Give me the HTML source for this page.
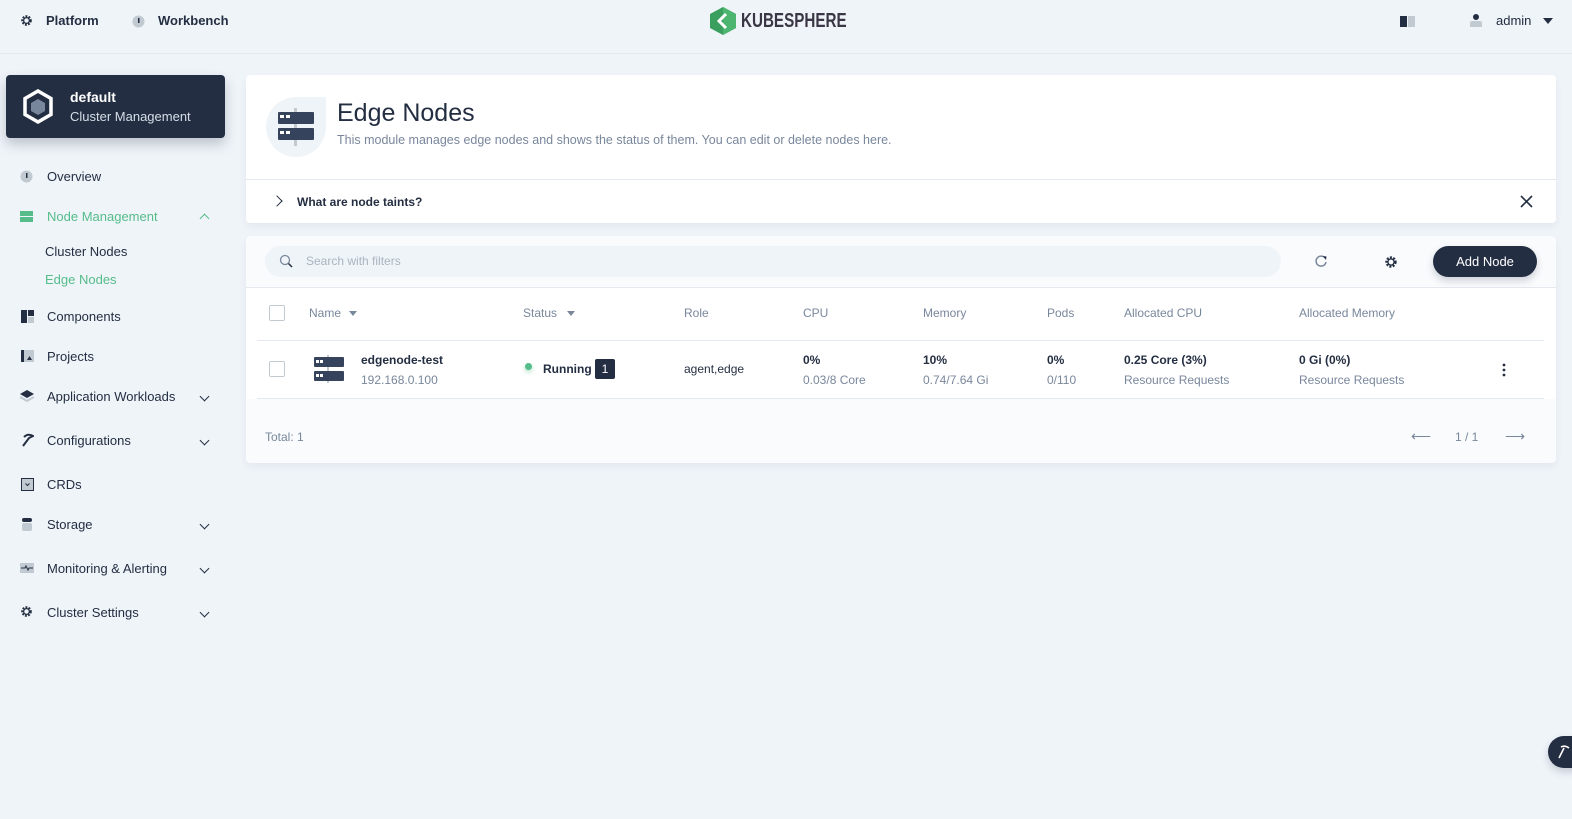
<!DOCTYPE html>
<html><head><meta charset="utf-8"><style>
*{box-sizing:border-box;margin:0;padding:0}
body{width:1572px;height:819px;background:#eff4f9;font-family:"Liberation Sans",sans-serif;color:#242e42;position:relative;overflow:hidden;font-size:12px}
.a{position:absolute}
.top{left:0;top:0;width:1572px;height:54px;border-bottom:1px solid #e3e9ef}
.nav{font-size:13px;font-weight:bold;color:#242e42}
.side{font-size:13px;color:#242e42}
.chev{width:7px;height:7px;border-right:1.5px solid #242e42;border-bottom:1.5px solid #242e42;transform:rotate(45deg)}
.card{background:#fff;border-radius:4px;box-shadow:0 4px 8px rgba(36,46,66,.06)}
.th{font-size:12px;color:#79879c;top:306px}
.cb{width:16px;height:16px;border:1px solid #c1c9d1;border-radius:2px;background:#fff}
.b{font-weight:bold;font-size:12px;color:#242e42}
.s{font-size:12px;color:#79879c}
</style></head><body>
<div class="a top"></div>
<svg class="a" style="left:20px;top:14px" width="13" height="13" viewBox="0 0 16 16"><circle cx="8" cy="8" r="5" fill="none" stroke="#242e42" stroke-width="3" stroke-dasharray="2.2 1.5"/><circle cx="8" cy="8" r="3.5" fill="none" stroke="#242e42" stroke-width="1.5"/></svg>
<div class="a nav" style="left:46px;top:13px">Platform</div>
<svg class="a" style="left:132px;top:15px" width="13" height="13"><circle cx="6.5" cy="6.5" r="6" fill="#c1c9d1"/><rect x="6" y="3" width="1.5" height="5" fill="#242e42"/></svg>
<div class="a nav" style="left:158px;top:13px">Workbench</div>
<svg class="a" style="left:710px;top:7px" width="26" height="28" viewBox="0 0 26 28"><path d="M13 0L26 7V21L13 28L0 21V7Z" fill="#3a9e5f"/><path d="M13 0L26 7V21L13 28Z" fill="#4cb56f"/><path d="M16 7L9 14L16 21" fill="none" stroke="#fff" stroke-width="3"/></svg>
<div class="a" style="left:741px;top:10px;font-size:20px;font-weight:bold;color:#3b3645;transform:scaleX(0.76);transform-origin:left top">KUBESPHERE</div>
<svg class="a" style="left:1400px;top:16px" width="15" height="11"><rect width="7" height="11" fill="#242e42"/><rect x="8" width="7" height="11" fill="#c1c9d1"/></svg>
<svg class="a" style="left:1470px;top:13px" width="12" height="14"><circle cx="6" cy="4" r="3" fill="#242e42"/><path d="M0 14V10Q0 8 3 8H9Q12 8 12 10V14Z" fill="#c1c9d1"/></svg>
<div class="a" style="left:1496px;top:13px;font-size:13px;color:#242e42">admin</div>
<div class="a" style="left:1543px;top:18px;border:5px solid transparent;border-top:6px solid #242e42"></div>

<div class="a" style="left:6px;top:75px;width:219px;height:63px;background:#242e42;border-radius:4px;box-shadow:0 6px 12px rgba(36,46,66,.25)"></div>
<svg class="a" style="left:22px;top:89px" width="32" height="35" viewBox="0 0 32 35"><path d="M16 2L29 9.5V25.5L16 33L3 25.5V9.5Z" fill="none" stroke="#fff" stroke-width="3.5"/><path d="M16 10L23 14V22L16 26L9 22V14Z" fill="#79879c"/></svg>
<div class="a" style="left:70px;top:89px;color:#fff;font-weight:bold;font-size:14px">default</div>
<div class="a" style="left:70px;top:109px;color:#d5dee7;font-size:13px">Cluster Management</div>

<svg class="a" style="left:20px;top:170px" width="13" height="13"><circle cx="6.5" cy="6.5" r="6" fill="#c1c9d1"/><rect x="6" y="3" width="1.5" height="5" fill="#242e42"/></svg>
<div class="a side" style="left:47px;top:169px">Overview</div>
<svg class="a" style="left:20px;top:211px" width="13" height="11"><rect width="13" height="5" fill="#55bc8a"/><rect y="6" width="13" height="5" fill="#55bc8a"/></svg>
<div class="a side" style="left:47px;top:209px;color:#55bc8a">Node Management</div>
<div class="a chev" style="left:201px;top:215px;transform:rotate(-135deg);border-color:#55bc8a"></div>
<div class="a side" style="left:45px;top:244px">Cluster Nodes</div>
<div class="a side" style="left:45px;top:272px;color:#55bc8a">Edge Nodes</div>
<svg class="a" style="left:21px;top:310px" width="13" height="13"><rect width="6" height="13" fill="#242e42"/><rect x="7" width="6" height="6" fill="#242e42"/><rect x="7" y="7" width="6" height="6" fill="#c1c9d1"/></svg>
<div class="a side" style="left:47px;top:309px">Components</div>
<svg class="a" style="left:21px;top:350px" width="13" height="12"><rect width="13" height="12" fill="#c1c9d1"/><rect width="3" height="12" fill="#242e42"/><path d="M6 10L8.5 6L11 10Z" fill="#242e42"/></svg>
<div class="a side" style="left:47px;top:349px">Projects</div>
<svg class="a" style="left:20px;top:390px" width="14" height="12"><path d="M7 0L14 4L7 8L0 4Z" fill="#242e42"/><path d="M0 7L7 11L14 7" fill="none" stroke="#c1c9d1" stroke-width="2"/></svg>
<div class="a side" style="left:47px;top:389px">Application Workloads</div>
<div class="a chev" style="left:201px;top:393px"></div>
<svg class="a" style="left:21px;top:433px" width="13" height="14"><path d="M3 4Q7 0 12 3L8 5L2 13" fill="none" stroke="#242e42" stroke-width="2"/></svg>
<div class="a side" style="left:47px;top:433px">Configurations</div>
<div class="a chev" style="left:201px;top:437px"></div>
<svg class="a" style="left:21px;top:478px" width="13" height="13"><rect x=".5" y=".5" width="12" height="12" fill="#c1c9d1" stroke="#242e42"/><path d="M4.5 5.5L6.5 7.5L8.5 5.5" fill="none" stroke="#242e42"/></svg>
<div class="a side" style="left:47px;top:477px">CRDs</div>
<svg class="a" style="left:22px;top:518px" width="10" height="13"><rect width="10" height="4" rx="2" fill="#242e42"/><rect y="5" width="10" height="8" rx="2" fill="#c1c9d1"/></svg>
<div class="a side" style="left:47px;top:517px">Storage</div>
<div class="a chev" style="left:201px;top:521px"></div>
<svg class="a" style="left:20px;top:563px" width="14" height="10"><rect width="14" height="10" fill="#c1c9d1"/><path d="M1 5H5L6 3L8 7L9 5H13" fill="none" stroke="#242e42"/></svg>
<div class="a side" style="left:47px;top:561px">Monitoring &amp; Alerting</div>
<div class="a chev" style="left:201px;top:565px"></div>
<svg class="a" style="left:20px;top:605px" width="13" height="13" viewBox="0 0 16 16"><circle cx="8" cy="8" r="5" fill="none" stroke="#242e42" stroke-width="3" stroke-dasharray="2.2 1.5"/><circle cx="8" cy="8" r="3.5" fill="none" stroke="#242e42" stroke-width="1.5"/></svg>
<div class="a side" style="left:47px;top:605px">Cluster Settings</div>
<div class="a chev" style="left:201px;top:609px"></div>

<div class="a card" style="left:246px;top:75px;width:1310px;height:148px"></div>
<div class="a" style="left:246px;top:179px;width:1310px;height:1px;background:#e3e9ef"></div>
<div class="a" style="left:266px;top:97px;width:60px;height:60px;background:#eff4f9;border-radius:30px 0 30px 30px"></div>
<svg class="a" style="left:278px;top:108px" width="36" height="38"><rect x="16" y="0" width="3" height="38" fill="#c1c9d1"/><rect y="4" width="36" height="12" rx="1" fill="#36435c"/><rect y="20" width="36" height="12" rx="1" fill="#36435c"/><rect x="2" y="7" width="4" height="3" fill="#fff"/><rect x="8" y="7" width="4" height="3" fill="#fff"/><rect x="2" y="23" width="4" height="3" fill="#fff"/><rect x="8" y="23" width="4" height="3" fill="#fff"/></svg>
<div class="a" style="left:337px;top:99px;font-size:25px;color:#242e42">Edge Nodes</div>
<div class="a" style="left:337px;top:133px;font-size:12.5px;color:#79879c">This module manages edge nodes and shows the status of them. You can edit or delete nodes here.</div>
<div class="a chev" style="left:273px;top:197px;transform:rotate(-45deg);width:8px;height:8px"></div>
<div class="a b" style="left:297px;top:195px">What are node taints?</div>
<svg class="a" style="left:1520px;top:195px" width="13" height="13"><path d="M1 1L12 12M12 1L1 12" stroke="#242e42" stroke-width="1.6"/></svg>

<div class="a card" style="left:246px;top:236px;width:1310px;height:227px;background:#f9fbfd"></div>
<div class="a" style="left:246px;top:288px;width:1310px;height:111px;background:#fff"></div>
<div class="a" style="left:246px;top:287px;width:1310px;height:1px;background:#e3e9ef"></div>
<div class="a" style="left:265px;top:246px;width:1016px;height:31px;background:#eff4f9;border-radius:16px"></div>
<svg class="a" style="left:279px;top:254px" width="14" height="14"><circle cx="6" cy="6" r="4.5" fill="none" stroke="#79879c" stroke-width="1.3"/><path d="M9.5 9.5L13 13" stroke="#242e42" stroke-width="1.5"/></svg>
<div class="a" style="left:306px;top:254px;font-size:12px;color:#abb4be">Search with filters</div>
<svg class="a" style="left:1314px;top:254px" width="14" height="14"><path d="M11 4A5 5 0 1 0 12 8" fill="none" stroke="#79879c" stroke-width="1.5"/><path d="M9 2L12.5 2.5L12 6Z" fill="#242e42"/></svg>
<svg class="a" style="left:1384px;top:255px" width="14" height="14" viewBox="0 0 16 16"><circle cx="8" cy="8" r="5" fill="none" stroke="#242e42" stroke-width="3" stroke-dasharray="2.2 1.5"/><circle cx="8" cy="8" r="3.5" fill="none" stroke="#242e42" stroke-width="1.5"/></svg>
<div class="a" style="left:1433px;top:246px;width:104px;height:31px;background:#242e42;border-radius:16px;color:#fff;font-size:13px;text-align:center;line-height:31px;box-shadow:0 4px 8px rgba(36,46,66,.2)">Add Node</div>

<div class="a cb" style="left:269px;top:305px"></div>
<div class="a th" style="left:309px">Name</div>
<div class="a" style="left:349px;top:311px;border:4.5px solid transparent;border-top:5px solid #79879c"></div>
<div class="a th" style="left:523px">Status</div>
<div class="a" style="left:567px;top:311px;border:4.5px solid transparent;border-top:5px solid #79879c"></div>
<div class="a th" style="left:684px">Role</div>
<div class="a th" style="left:803px">CPU</div>
<div class="a th" style="left:923px">Memory</div>
<div class="a th" style="left:1047px">Pods</div>
<div class="a th" style="left:1124px">Allocated CPU</div>
<div class="a th" style="left:1299px">Allocated Memory</div>
<div class="a" style="left:257px;top:340px;width:1287px;height:1px;background:#e3e9ef"></div>
<div class="a" style="left:257px;top:398px;width:1287px;height:1px;background:#e3e9ef"></div>

<div class="a cb" style="left:269px;top:361px"></div>
<svg class="a" style="left:314px;top:355px" width="30" height="28"><rect x="13" width="2" height="28" fill="#c1c9d1"/><rect y="2" width="30" height="10" rx="1" fill="#36435c"/><rect y="16" width="30" height="10" rx="1" fill="#36435c"/><rect x="2" y="5" width="3" height="3" fill="#fff"/><rect x="6" y="5" width="3" height="3" fill="#fff"/><rect x="2" y="19" width="3" height="3" fill="#fff"/><rect x="6" y="19" width="3" height="3" fill="#fff"/></svg>
<div class="a b" style="left:361px;top:353px">edgenode-test</div>
<div class="a s" style="left:361px;top:373px">192.168.0.100</div>
<div class="a" style="left:525px;top:363px;width:7px;height:7px;border-radius:50%;background:#55bc8a;box-shadow:0 2px 5px rgba(85,188,138,.5)"></div>
<div class="a b" style="left:543px;top:362px">Running</div>
<div class="a" style="left:595px;top:359px;width:20px;height:20px;background:#242e42;border-radius:2px;color:#fff;font-size:12px;text-align:center;line-height:20px">1</div>
<div class="a" style="left:684px;top:362px;font-size:12px;color:#242e42">agent,edge</div>
<div class="a b" style="left:803px;top:353px">0%</div><div class="a s" style="left:803px;top:373px">0.03/8 Core</div>
<div class="a b" style="left:923px;top:353px">10%</div><div class="a s" style="left:923px;top:373px">0.74/7.64 Gi</div>
<div class="a b" style="left:1047px;top:353px">0%</div><div class="a s" style="left:1047px;top:373px">0/110</div>
<div class="a b" style="left:1124px;top:353px">0.25 Core (3%)</div><div class="a s" style="left:1124px;top:373px">Resource Requests</div>
<div class="a b" style="left:1299px;top:353px">0 Gi (0%)</div><div class="a s" style="left:1299px;top:373px">Resource Requests</div>
<svg class="a" style="left:1502px;top:363px" width="4" height="14"><circle cx="2" cy="2" r="1.4" fill="#242e42"/><circle cx="2" cy="7" r="1.4" fill="#242e42"/><circle cx="2" cy="12" r="1.4" fill="#242e42"/></svg>

<div class="a s" style="left:265px;top:430px">Total: 1</div>
<div class="a s" style="left:1411px;top:428px;font-size:14px">⟵</div>
<div class="a s" style="left:1455px;top:430px">1 / 1</div>
<div class="a s" style="left:1505px;top:428px;font-size:14px">⟶</div>

<div class="a" style="left:1548px;top:736px;width:40px;height:32px;border-radius:16px;background:#242e42;box-shadow:0 4px 8px rgba(36,46,66,.2)"></div>
<svg class="a" style="left:1558px;top:744px" width="12" height="16"><path d="M1 14L6 4M3 3Q7 1 11 4" fill="none" stroke="#fff" stroke-width="1.6"/></svg>
</body></html>
